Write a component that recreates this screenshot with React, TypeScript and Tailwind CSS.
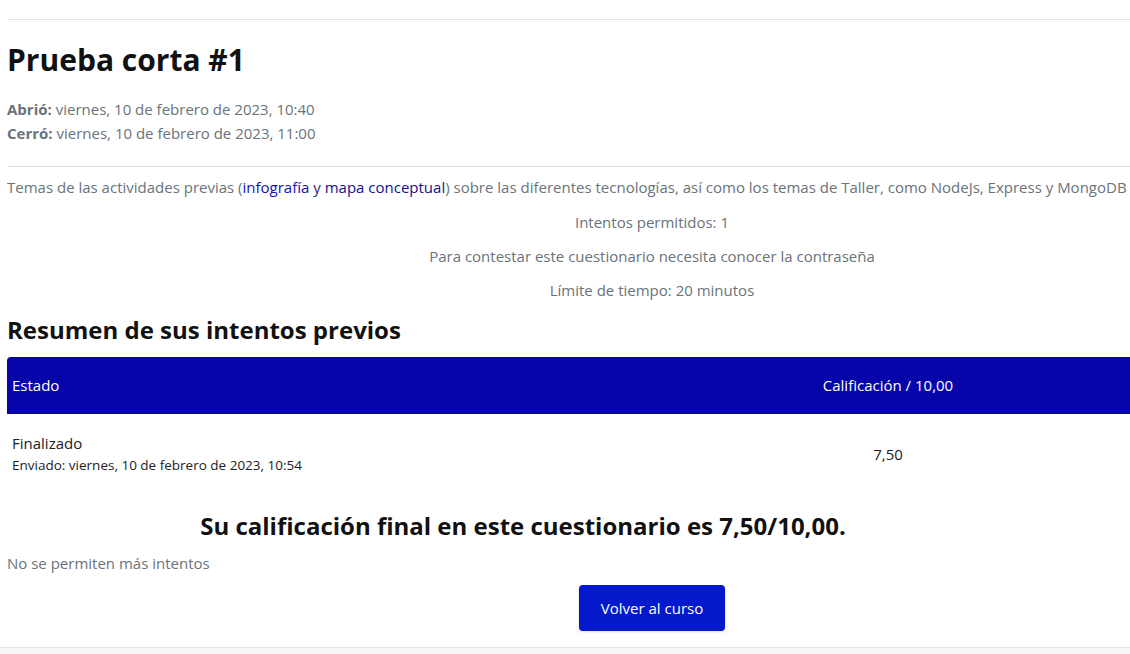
import React from "react";

const font = { fontFamily: '"Open Sans", "Noto Sans", sans-serif' };

const rules = [
  "Intentos permitidos: 1",
  "Para contestar este cuestionario necesita conocer la contraseña",
  "Límite de tiempo: 20 minutos",
];

export default function App() {
  return (
    <div className="h-[654px] w-[1130px] overflow-hidden bg-white" style={font}>
      <div className="w-[1304px] px-[7px]">
        <div className="h-[20px] border-b border-[#e3e3e3]" />

        <h1 className="mt-[22px] text-[30px] font-bold leading-[36px] text-[#111]">Prueba corta #1</h1>

        <div className="mt-[19px] text-[15px] leading-[24px] text-[#6a737b]">
          <div>
            <span className="font-bold">Abrió:</span> viernes, 10 de febrero de 2023, 10:40
          </div>
          <div>
            <span className="font-bold">Cerró:</span> viernes, 10 de febrero de 2023, 11:00
          </div>
        </div>

        <div className="mt-[21px] border-t border-[#dee2e6]" />

        <p className="mt-[8px] text-[15px] leading-[24px] text-[#6a737b]">
          Temas de las actividades previas (<a className="text-[#1212b4]">infografía</a>
          <span className="text-[#2a2a80]"> y </span>
          <a className="text-[#10108c]">mapa conceptual</a>) sobre las diferentes tecnologías, así como los temas de
          Taller, como NodeJs, Express y MongoDB
        </p>

        <div className="mt-[11px] flex flex-col gap-[10px] text-center text-[15px] leading-[24px] text-[#6a737b]">
          {rules.map((r) => (
            <div key={r}>{r}</div>
          ))}
        </div>

        <h2 className="mt-[12px] text-[24px] font-bold leading-[32px] text-[#111]">Resumen de sus intentos previos</h2>

        <div className="mt-[11px] text-[15px]">
          <div className="grid h-[57px] grid-cols-[472px_1fr] items-center rounded-tl-[4px] bg-[#0505a9] text-white">
            <div className="pl-[5px]">Estado</div>
            <div className="text-center">Calificación / 10,00</div>
          </div>
          <div className="grid h-[80px] grid-cols-[472px_1fr] items-center text-[#1d2125]">
            <div className="pl-[5px]">
              <div className="leading-[22px]">Finalizado</div>
              <div className="text-[13.5px] leading-[22px]">Enviado: viernes, 10 de febrero de 2023, 10:54</div>
            </div>
            <div className="text-center">7,50</div>
          </div>
        </div>

        <h3 className="mt-[16px] w-[1032px] text-center text-[24px] font-bold leading-[32px] text-[#111]">
          Su calificación final en este cuestionario es 7,50/10,00.
        </h3>

        <p className="mt-[9px] text-[15px] leading-[24px] text-[#6a737b]">No se permiten más intentos</p>

        <div className="mt-[10px] flex justify-center">
          <button className="h-[46px] w-[146px] rounded-[4px] bg-[#0418cc] text-[15px] text-white shadow-sm">
            Volver al curso
          </button>
        </div>
      </div>

      <div className="mt-[16px] h-[40px] border-t border-[#e6e7ea] bg-[#f7f8f9]" />
    </div>
  );
}
